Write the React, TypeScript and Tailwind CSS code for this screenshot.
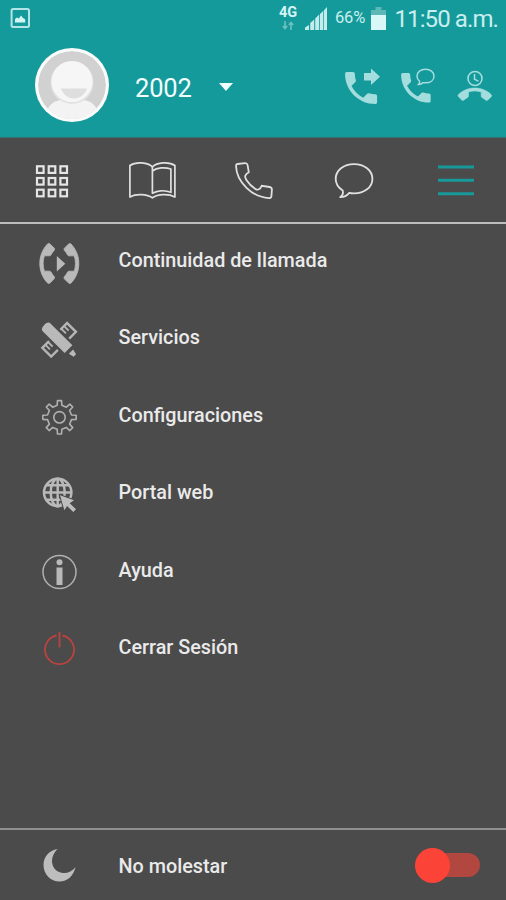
import { useState, type ReactNode } from "react";

const CALL =
  "M6.62 10.79c1.44 2.83 3.76 5.14 6.59 6.59l2.2-2.2c.27-.27.67-.36 1.02-.24 1.12.37 2.33.57 3.57.57.55 0 1 .45 1 1V20c0 .55-.45 1-1 1-9.39 0-17-7.61-17-17 0-.55.45-1 1-1h3.5c.55 0 1 .45 1 1 0 1.25.2 2.45.57 3.57.11.35.03.74-.25 1.02l-2.2 2.2z";
const CALL_END =
  "M12 9c-1.6 0-3.15.25-4.6.72v3.1c0 .39-.23.74-.56.9-.98.49-1.87 1.12-2.66 1.85-.18.18-.43.28-.7.28-.28 0-.53-.11-.71-.29L.29 13.08c-.18-.17-.29-.42-.29-.7 0-.28.11-.53.29-.71C3.34 8.78 7.46 7 12 7s8.66 1.78 11.71 4.67c.18.18.29.43.29.71 0 .28-.11.53-.29.71l-2.48 2.48c-.18.18-.43.29-.71.29-.27 0-.52-.11-.7-.28-.79-.74-1.69-1.36-2.67-1.85-.33-.16-.56-.5-.56-.9v-3.1C15.15 9.25 13.6 9 12 9z";

// eight square teeth around (20, 20); offsets are degrees from each tooth's axis
const gear = Array.from({ length: 8 }, (_, i) =>
  [
    [-11, 12.2],
    [-7, 16.8],
    [7, 16.8],
    [11, 12.2],
  ].map(([offset, r]) => {
    const a = ((i * 45 + offset) * Math.PI) / 180;
    return `${(20 + r * Math.cos(a)).toFixed(2)},${(20 + r * Math.sin(a)).toFixed(2)}`;
  })
)
  .flat()
  .join(" ");

// every icon is drawn 1:1 on a 40px canvas centred on (20, 20)
function Icon({ children, className = "" }: { children: ReactNode; className?: string }) {
  return (
    <svg viewBox="0 0 40 40" className={`w-10 h-10 shrink-0 overflow-visible ${className}`} fill="none">
      {children}
    </svg>
  );
}

function StatusBar() {
  return (
    <div className="flex h-9 items-center pl-[10px] text-[#c9eeee]">
      <svg viewBox="0 0 20 20" className="w-5 h-5" fill="none">
        <rect x="1.6" y="1" width="17.4" height="18" rx="1.5" stroke="#b3e5e5" strokeWidth="2" />
        <path d="M5 14.5V11l2-1.5 2 1 2-3 2 2.5 2.2 1.2v3.3z" fill="#d5f5f5" />
      </svg>
      <div className="ml-[246px] flex w-6 flex-col items-center">
        <span className="text-[14.5px] font-bold leading-[13px] text-[#d6f4f4]">4G</span>
        <svg viewBox="0 0 12 9" className="mt-[2px] w-3 h-[9px]" stroke="#6fc1c1" strokeWidth="1.6" fill="none">
          <path d="M3 0v7M.8 5 3 7.5 5.2 5M9 9V2M6.8 4 9 1.5 11.2 4" />
        </svg>
      </div>
      <svg viewBox="0 0 22 23" className="ml-[5px] w-[22px] h-[23px]" fill="#c4ecec">
        <path d="M0 23v-2.500l4-2.500v5zM5.200 23v-7l4-3.500V23zM10.200 23V11.500l4-4V23zM15 23V7l3.300-3.200V23zM19 23V3.200L22 0v23z" />
      </svg>
      <span className="ml-[8px] w-[32px] text-[16.500px] tracking-[-0.2px]">66%</span>
      <svg viewBox="0 0 15 23" className="ml-[4px] w-[15px] h-[23px]">
        <path d="M4.500 0h6v3H15v5H0V3h4.500z" fill="#5cb8b7" />
        <path d="M0 8h15v15H0z" fill="#d9f7f6" />
      </svg>
      <span className="ml-[8.500px] mt-px whitespace-nowrap text-[24px] tracking-[-0.9px]">11:50 a.m.</span>
    </div>
  );
}

function Avatar() {
  return (
    <svg viewBox="0 0 74 74" className="w-[74px] h-[74px] shrink-0">
      <defs>
        <clipPath id="avatar">
          <circle cx="37" cy="37" r="34" />
        </clipPath>
      </defs>
      <circle cx="37" cy="37" r="37" fill="#fafafa" />
      <g clipPath="url(#avatar)">
        <circle cx="37" cy="37" r="34" fill="#d1d1d1" />
        <path d="M10 74c0-15 8-22 17-22h20c10 0 18 8 18 22z" fill="#f3f3f3" />
        <circle cx="37" cy="34.500" r="21.500" fill="#e2e2e2" />
        <circle cx="37" cy="33.500" r="20.500" fill="#f6f6f6" />
        <path d="M26 40.500h26c-2 6-7 10-13 10s-11-4-13-10z" fill="#dedede" />
      </g>
    </svg>
  );
}

function ProfileBar() {
  return (
    <div className="flex h-[98px] items-center pl-[35px] text-[#a3dddd]">
      <Avatar />
      <span className="ml-[26px] mt-[7px] w-[58px] text-[25.500px] tracking-[-0.2px] text-[#f2fdfd]">2002</span>
      <svg viewBox="0 0 14 8" className="ml-[26px] mt-[3px] w-[14px] h-2">
        <path d="M0 0h14L7 8z" fill="#f2fdfd" />
      </svg>
      <Icon className="ml-[109px] mt-[3px]">
        <path d={CALL} fill="currentColor" transform="translate(-2.300 -.3) scale(1.780)" />
        <path d="M22 6h7V1.500l9 8.300-9 8.200v-4.500h-7z" fill="currentColor" />
      </Icon>
      <Icon className="ml-[16px] mt-[3px]">
        <path d={CALL} fill="currentColor" transform="translate(-1.800 1.100) scale(1.640)" />
        <path
          d="M20.500 17.500c1-1 1.300-2 1-3.300-1.800-1.500-2.500-3.200-2.500-5C19 5 22.800 2.300 27.500 2.300S36 5 36 9.200s-3.800 6.600-8.500 6.600c-.8 0-1.600 0-2.300-.2-1.200 1.200-2.700 1.900-4.700 1.900z"
          stroke="currentColor"
          strokeWidth="1.500"
        />
      </Icon>
      <Icon className="ml-[16px] mt-[5px]">
        <path d={CALL_END} fill="currentColor" stroke="currentColor" strokeWidth=".5" transform="translate(4 10.300) scale(1.400)" />
        <circle cx="21" cy="10.500" r="7" stroke="currentColor" strokeWidth="1.600" />
        <path d="M20.500 6v5.200l3.800 2" stroke="currentColor" strokeWidth="1.500" />
      </Icon>
    </div>
  );
}

const tabs = [
  {
    id: "teclado",
    icon: (
      <g stroke="#e6e6e6" strokeWidth="2.200">
        {[6.300, 18, 29.700].map((y) =>
          [5, 16.700, 28.400].map((x) => <rect key={`${x}-${y}`} x={x} y={y} width="6.600" height="6.600" />)
        )}
      </g>
    ),
  },
  {
    id: "agenda",
    icon: (
      <g stroke="#e0e0e0" strokeWidth="1.700" strokeLinejoin="round" transform="translate(-.6 0)">
        <path d="M20 6.800C15.500 2.800 4 1-2.500 5.500v31.500c6-3.500 17-3 22.500.8C25.500 34 36 33.500 42.500 37V5.500C36 1 24.500 2.800 20 6.800z" />
        <path d="M20 6.800v26.500c5-2.800 12.500-3.500 18.500-1V9C32.500 7 24.500 7.500 20 11" />
      </g>
    ),
  },
  {
    id: "llamadas",
    icon: (
      <path
        d="M3.500 3.200 11 2.300c1.500-.1 2.300.6 2.600 2l1.200 7.200c-4 2.200-4.600 4.300-2.400 7.700 2.300 3.600 5.200 6.500 9 8.900 2.600 1.600 4.700.4 6.300-3.100l7.900 1.200c1.600.3 2.300 1.200 2.300 2.600l-.5 6.500c-.1 1.200-1 2-2.300 2C18.500 36.500 2.500 21.500 2 5c0-1 .5-1.700 1.500-1.800z"
        stroke="#e0e0e0"
        strokeWidth="1.800"
        transform="translate(0 .8)"
      />
    ),
  },
  {
    id: "mensajes",
    icon: (
      <path
        d="M5.500 36.300c2.300-1.600 3.200-4 2.500-6.700C3.500 26.500 1 22.500 1 18 1 9.500 9 3.200 19.300 3.200S37.700 9.500 37.700 18 29.500 32.500 19.300 32.500c-1.700 0-3.300-.1-4.800-.5-2.200 2.800-5.500 4.200-9 4.300z"
        stroke="#e0e0e0"
        strokeWidth="1.800"
        strokeLinejoin="round"
        transform="translate(-.3 .9)"
      />
    ),
  },
  {
    id: "menu",
    icon: <path d="M2 7h36M2 20.300h36M2 33.700h36" stroke="#17999a" strokeWidth="3" />,
  },
];

const rows = [
  {
    label: "Continuidad de llamada",
    icon: (
      <g fill="#b9b9b9" transform="translate(.3 1.500)">
        <path d={CALL_END} transform="translate(-11.200 40) rotate(-90) scale(1.670)" stroke="#b9b9b9" strokeWidth=".5" />
        <path d={CALL_END} transform="translate(51.200 0) rotate(90) scale(1.670)" stroke="#b9b9b9" strokeWidth=".5" />
        <path d="m17.500 12.500 8.500 7.700-8.500 7.700z" />
      </g>
    ),
  },
  {
    label: "Servicios",
    icon: (
      <g>
        <g transform="translate(.3 1) rotate(-45 20 20)" stroke="#b5b5b5" strokeWidth="2.400">
          <path d="M12 13.500H2.500v12.500H12M28 13.500h9.500v12.500H28" />
          <path d="M6.800 14v6M10.600 14v6M29.400 14v6M33.200 14v6" strokeWidth="1.900" />
        </g>
        <g transform="translate(.3 1) rotate(45 20 20)" fill="#b9b9b9">
          <path d="M2 14.500c-2 0-3.300 2-3.300 5.500S0 25.500 2 25.500h31v-11zM36.500 17v6l5.500-1.300v-3.400z" />
        </g>
      </g>
    ),
  },
  {
    label: "Configuraciones",
    icon: (
      <g stroke="#b0b0b0" strokeWidth="1.600" strokeLinejoin="round" transform="translate(.5 .3)">
        <circle cx="20" cy="20" r="5.700" />
        <polygon points={gear} />
      </g>
    ),
  },
  {
    label: "Portal web",
    icon: (
      <g transform="translate(.5 .3)">
        <g stroke="#b9b9b9" strokeWidth="2.500">
          <circle cx="18.200" cy="18.200" r="13.700" />
          <ellipse cx="18.200" cy="18.200" rx="7" ry="13.700" />
          <path d="M18.200 4.500v27.500M4.500 18.200h27.400M7 11h22.500M7 25.500h22.500" />
        </g>
        <path
          d="m20.500 21 14 5-4.300 3 6.300 6-2.700 2.700-6.300-6-2.600 4.300z"
          fill="#bdbdbd"
          stroke="#4b4b4b"
          strokeWidth="2"
          paintOrder="stroke"
        />
      </g>
    ),
  },
  {
    label: "Ayuda",
    icon: (
      <g transform="translate(.5 0)">
        <circle cx="20" cy="20" r="16.500" stroke="#b0b0b0" strokeWidth="1.500" />
        <circle cx="20" cy="10.300" r="3" fill="#b9b9b9" />
        <path d="M17 15.500h6V33h-6z" fill="#b9b9b9" />
      </g>
    ),
  },
  {
    label: "Cerrar Sesión",
    icon: <path d="M17.500 6.500a14.500 14.500 0 1 0 6 0M20.500 3v15.500" stroke="#b9443f" strokeWidth="1.800" />,
  },
];

export default function App() {
  const [dnd, setDnd] = useState(false);

  return (
    <div className="flex h-[900px] w-[506px] flex-col overflow-hidden bg-[#4b4b4b] font-['Roboto',sans-serif]">
      <header className="h-[138px] shrink-0 border-b border-[#34706f] bg-[#159a9b]">
        <StatusBar />
        <ProfileBar />
      </header>

      <nav className="grid h-[86px] shrink-0 grid-cols-5 border-b-2 border-[#bdbdbd] pl-[1px]">
        {tabs.map((tab) => (
          <button key={tab.id} aria-label={tab.id} className="flex items-center justify-center">
            <Icon>{tab.icon}</Icon>
          </button>
        ))}
      </nav>

      <main className="flex-1">
        {rows.map((row) => (
          <button key={row.label} className="flex h-[77.400px] w-full items-start pl-[39px] pt-[18px] text-left">
            <Icon>{row.icon}</Icon>
            <span className="ml-[39.500px] mt-[3px] text-[19.800px] font-medium leading-8 text-[#eaeaea]">{row.label}</span>
          </button>
        ))}
      </main>

      <footer className="flex h-[72px] shrink-0 items-center border-t-2 border-[#8f8f8f] pl-[39px] pr-[26px]">
        <Icon>
          <path d="M18.500 4C10 5.500 4.500 12 4.500 20c0 9 7 16.500 16 16.500 8 0 14-5.500 16-14.500-3.500 4.500-8 6.500-12.500 6-6.500-.6-11-5.500-11-12 0-4.500 2-8.500 5.500-12z" fill="#bdbdbd" />
        </Icon>
        <span className="ml-[39.500px] mt-[4px] text-[19.800px] font-medium text-[#eaeaea]">No molestar</span>
        <button
          role="switch"
          aria-checked={dnd}
          aria-label="No molestar"
          onClick={() => setDnd(!dnd)}
          className={`ml-auto flex h-6 w-[61px] items-center rounded-full bg-[#b2473f] ${dnd ? "justify-end" : ""}`}
        >
          <span className="-ml-1 h-[35px] w-[35px] shrink-0 rounded-full bg-[#fb4437]" />
        </button>
      </footer>
    </div>
  );
}
